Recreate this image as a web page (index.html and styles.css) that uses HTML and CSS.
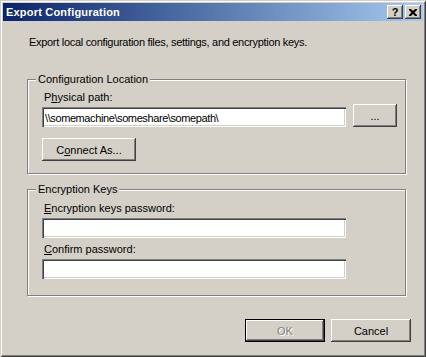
FILE: index.html
```html
<!DOCTYPE html>
<html lang="en">
<head>
  <meta charset="UTF-8">
  <title>Export Configuration</title>
  <link rel="stylesheet" href="styles.css">
</head>
<body>
  <div class="window">
    <div class="titlebar">
      <span class="title">Export Configuration</span>
      <div class="caption-buttons">
        <span class="cap-btn">?</span>
        <span class="cap-btn">
          <svg width="8" height="7" viewBox="0 0 8 7"><path d="M0 0h2l2 2 2-2h2v1l-2.5 2.5L8 6v1H6L4 5 2 7H0V6l2.5-2.5L0 1z" fill="#000"/></svg>
        </span>
      </div>
    </div>

    <div class="content">
      <p class="intro">Export local configuration files, settings, and encryption keys.</p>

      <div class="group group-location">
        <span class="group-title">Configuration Location</span>
        <label class="field-label" for="path">P<u>h</u>ysical path:</label>
        <div class="path-row">
          <input class="textbox path" id="path" type="text" value="\\somemachine\someshare\somepath\">
          <button class="btn browse">...</button>
        </div>
        <button class="btn connect">C<u>o</u>nnect As...</button>
      </div>

      <div class="group group-keys">
        <span class="group-title">Encryption Keys</span>
        <label class="field-label" for="keyPassword"><u>E</u>ncryption keys password:</label>
        <input class="textbox" id="keyPassword" type="password">
        <label class="field-label second" for="confirmPassword"><u>C</u>onfirm password:</label>
        <input class="textbox" id="confirmPassword" type="password">
      </div>

      <div class="actions">
        <button class="btn default" disabled>OK</button>
        <button class="btn">Cancel</button>
      </div>
    </div>
  </div>
</body>
</html>
```

FILE: styles.css
```css
body {
  margin: 0;
  background: #d4d0c8;
  font-family: 'Liberation Sans', Arial, sans-serif;
  font-size: 11px;
  color: #000;
}
.window {
  width: 426px;
  height: 357px;
  box-sizing: border-box;
  padding: 3px;
  background: #d4d0c8;
  box-shadow: inset 1px 1px #d4d0c8, inset -1px -1px #404040, inset 2px 2px #fff, inset -2px -2px #808080;
  display: flex;
  flex-direction: column;
}
.titlebar {
  height: 18px;
  display: flex;
  align-items: center;
  justify-content: space-between;
  padding: 0 2px 0 3px;
  background: linear-gradient(to right, #0a246a, #a6caf0);
}
.title {
  color: #fff;
  font-weight: bold;
  font-size: 11px;
  letter-spacing: 0.2px;
}
.caption-buttons {
  display: flex;
  gap: 2px;
}
.cap-btn {
  width: 16px;
  height: 14px;
  box-sizing: border-box;
  display: flex;
  align-items: center;
  justify-content: center;
  background: #d4d0c8;
  font-weight: bold;
  font-size: 11px;
  box-shadow: inset -1px -1px #404040, inset 1px 1px #fff, inset -2px -2px #808080;
}
.content {
  flex: 1;
  padding: 0 12px 0 24px;
  display: flex;
  flex-direction: column;
}
.intro {
  margin: 15px 0 0 2px;
  line-height: 13px;
  letter-spacing: -0.3px;
}
.group {
  position: relative;
  width: 379px;
  box-sizing: border-box;
  border: 1px solid #808080;
  box-shadow: inset 1px 1px #fff, 1px 1px #fff;
  display: flex;
  flex-direction: column;
  align-items: flex-start;
}
.group-location {
  margin-top: 30px;
  height: 95px;
  padding: 11px 0 0 14px;
}
.group-keys {
  margin-top: 15px;
  height: 107px;
  padding: 12px 0 0 14px;
}
.group-title {
  position: absolute;
  top: -7px;
  left: 8px;
  padding: 0 2px;
  line-height: 13px;
  background: #d4d0c8;
}
.field-label {
  margin-left: 2px;
  line-height: 13px;
}
.group-keys .field-label {
  margin-bottom: 3px;
}
.field-label.second {
  margin-top: 5px;
}
.path-row {
  display: flex;
  align-items: flex-end;
  gap: 7px;
}
.textbox {
  width: 304px;
  height: 20px;
  box-sizing: border-box;
  margin: 0;
  padding: 1px 3px 0;
  border: none;
  background: #fff;
  font-family: inherit;
  font-size: 11px;
  color: #000;
  box-shadow: inset 1px 1px #808080, inset 2px 2px #404040, inset -1px -1px #fff, inset -2px -2px #d4d0c8;
  outline: none;
}
.textbox.path {
  letter-spacing: -0.4px;
}
.btn {
  height: 23px;
  margin: 0;
  padding: 0;
  border: none;
  background: #d4d0c8;
  font-family: inherit;
  font-size: 11px;
  color: #000;
  box-shadow: inset -1px -1px #404040, inset 1px 1px #fff, inset -2px -2px #808080;
}
.browse {
  width: 44px;
}
.connect {
  width: 94px;
  margin-top: 11px;
}
.actions {
  margin-top: 23px;
  display: flex;
  justify-content: flex-end;
  gap: 6px;
}
.actions .btn {
  width: 80px;
}
.btn.default {
  box-shadow: inset 0 0 0 1px #000, inset -2px -2px #404040, inset 2px 2px #fff, inset -3px -3px #808080;
}
.btn:disabled {
  color: #808080;
  text-shadow: 1px 1px #fff;
}
```
